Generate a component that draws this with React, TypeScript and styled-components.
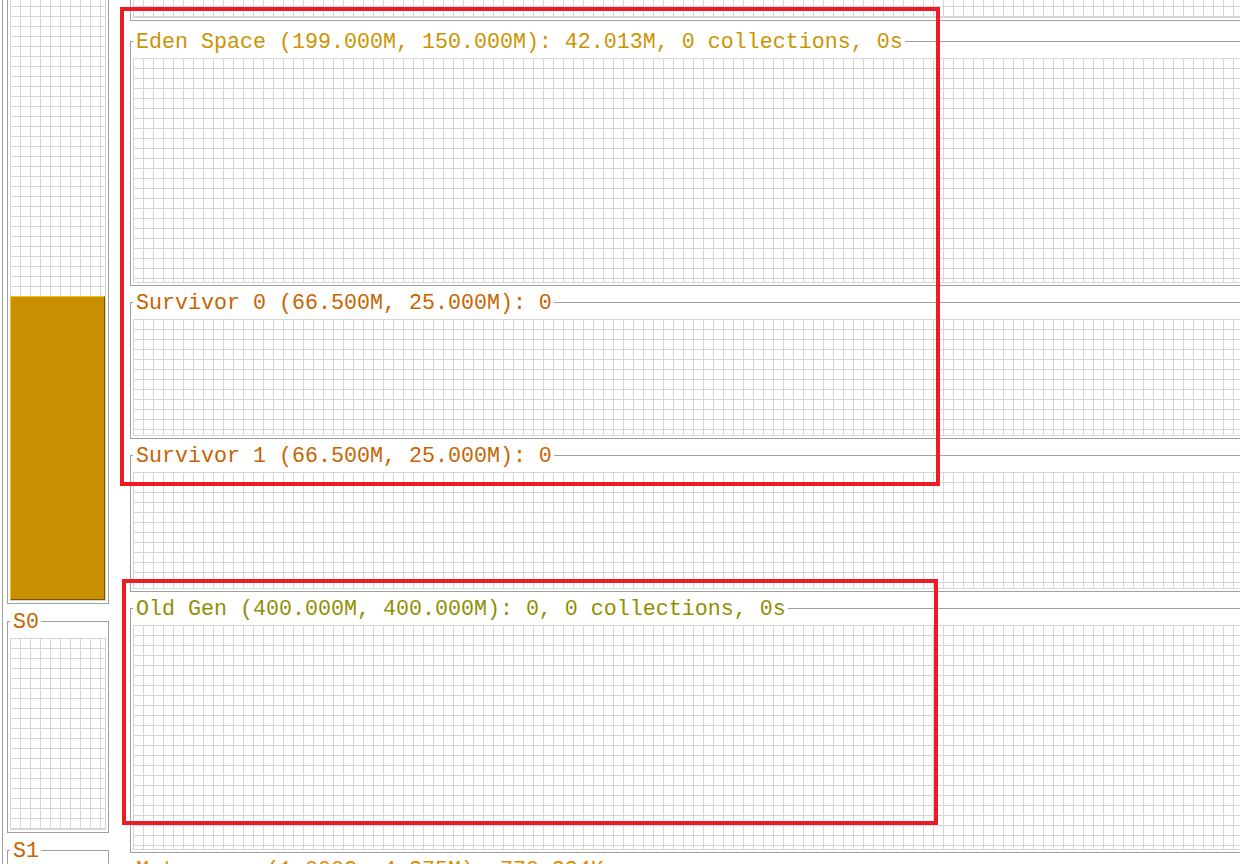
import React from 'react';
import styled, { createGlobalStyle } from 'styled-components';

const EDGE = '#a0a0a0';
const MESH = '#d6d6d6';

const COLORS = {
  eden: '#cc9400',
  survivor: '#c86400',
  old: '#8f8f00',
  meta: '#e08a00',
};

const SPACES = [
  { id: 'eden', title: 'Eden Space (199.000M, 150.000M): 42.013M, 0 collections, 0s', color: COLORS.eden, height: 225, top: 9 },
  { id: 's0', title: 'Survivor 0 (66.500M, 25.000M): 0', color: COLORS.survivor, height: 117, top: 5 },
  { id: 's1', title: 'Survivor 1 (66.500M, 25.000M): 0', color: COLORS.survivor, height: 117, top: 5 },
  { id: 'old', title: 'Old Gen (400.000M, 400.000M): 0, 0 collections, 0s', color: COLORS.old, height: 225, top: 5 },
  { id: 'meta', title: 'Metaspace (1.000G, 4.375M): 770.234K', color: COLORS.meta, height: 120, top: 5 },
];

// red annotation boxes drawn over the screenshot
const MARKS = [
  { left: 120, top: 7, width: 820, height: 479 },
  { left: 122, top: 579, width: 816, height: 246 },
];

const GlobalStyle = createGlobalStyle`
  html, body {
    margin: 0;
    padding: 0;
    background: #ffffff;
    overflow: hidden;
  }
  body {
    font-family: "Liberation Mono", "DejaVu Sans Mono", monospace;
  }
`;

const Screen = styled.div`
  position: relative;
  display: flex;
  align-items: flex-start;
  width: 1240px;
  height: 864px;
  overflow: hidden;
  background: #ffffff;
`;

const SidePane = styled.div`
  flex: 0 0 102px;
  height: 864px;
  margin-left: 2px;
  padding-left: 4px;
  border-left: 1px solid ${EDGE};
  display: flex;
  flex-direction: column;
  gap: 6px;
`;

const MainPane = styled.div`
  flex: 0 0 1300px;
  margin-left: 21px;
  display: flex;
  flex-direction: column;
`;

const Panel = styled.fieldset<{ $top?: number }>`
  margin: ${(p) => p.$top ?? 0}px 0 0;
  padding: 5px 2px 2px;
  border: 1px solid ${EDGE};
  min-width: 0;
  flex-shrink: 0;
`;

const Caption = styled.legend<{ $color: string }>`
  margin: 0;
  padding: 3px 2px 0 3px;
  font-family: "Liberation Mono", "DejaVu Sans Mono", monospace;
  font-size: 21.66px;
  line-height: 20px;
  color: ${(p) => p.$color};
  white-space: pre;
`;

const Grid = styled.div<{ $h: number }>`
  height: ${(p) => p.$h}px;
  box-sizing: border-box;
  border-right: 1px solid ${MESH};
  border-bottom: 1px solid ${MESH};
  background-image: linear-gradient(to right, ${MESH} 1px, transparent 1px),
    linear-gradient(to bottom, ${MESH} 1px, transparent 1px);
  background-size: 10px 10px;
  display: flex;
  flex-direction: column;
  justify-content: flex-end;
`;

const Bar = styled.div<{ $h: number }>`
  height: ${(p) => p.$h}px;
  box-sizing: border-box;
  background: #c89000;
  border: 1px solid;
  border-color: #f2c418 #7a5800 #7a5800 #f2c418;
`;

const Mark = styled.div`
  position: absolute;
  box-sizing: border-box;
  border: 4px solid #ed1c24;
  pointer-events: none;
`;

export default function App() {
  return (
    <>
      <GlobalStyle />
      <Screen>
        <SidePane>
          <Panel $top={-100}>
            <Grid $h={695}>
              <Bar $h={304} />
            </Grid>
          </Panel>
          <Panel>
            <Caption $color={COLORS.survivor}>S0</Caption>
            <Grid $h={192} />
          </Panel>
          <Panel>
            <Caption $color={COLORS.survivor}>S1</Caption>
            <Grid $h={192} />
          </Panel>
        </SidePane>
        <MainPane>
          <Panel $top={-100}>
            <Grid $h={112} />
          </Panel>
          {SPACES.map((s) => (
            <Panel key={s.id} $top={s.top}>
              <Caption $color={s.color}>{s.title}</Caption>
              <Grid $h={s.height} />
            </Panel>
          ))}
        </MainPane>
        {MARKS.map((m, i) => (
          <Mark
            key={i}
            style={{ left: m.left, top: m.top, width: m.width, height: m.height }}
          />
        ))}
      </Screen>
    </>
  );
}
